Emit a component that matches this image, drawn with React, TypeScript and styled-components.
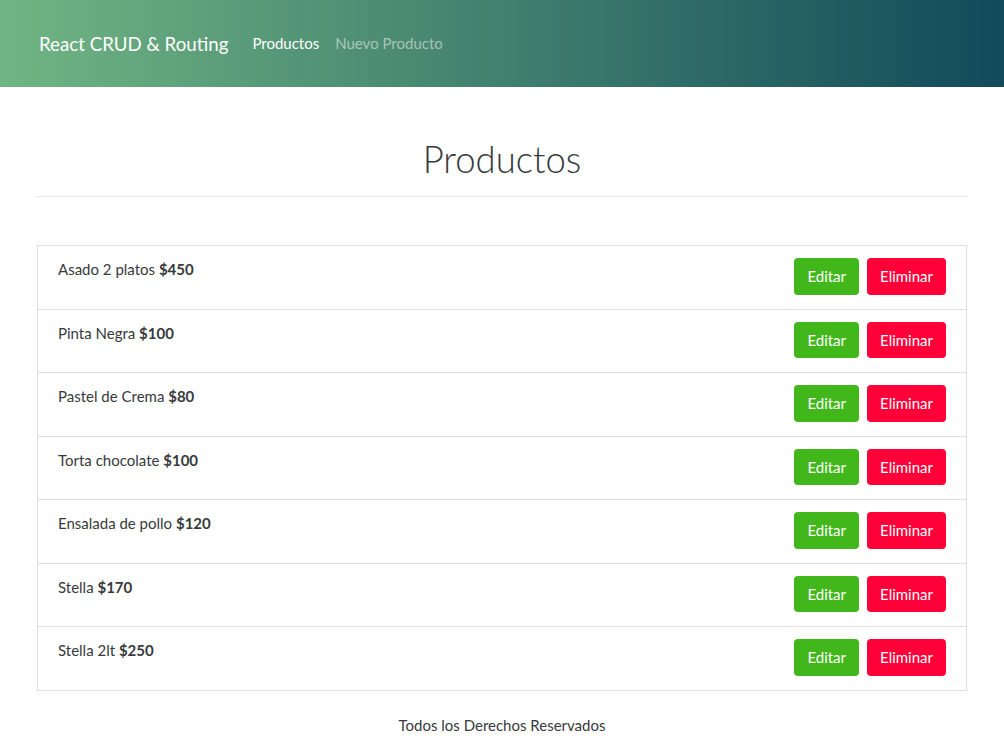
import React from "react";
import styled, { createGlobalStyle } from "styled-components";

const Global = createGlobalStyle`
  * { box-sizing: border-box; }
  html { font-size: 16px; }
  body {
    margin: 0;
    font-family: Lato, "Open Sans", sans-serif;
    font-size: 15px;
    line-height: 1.5;
    color: #373a3c;
    background: #fff;
  }
`;

const Navbar = styled.nav`
  height: 87px;
  background: linear-gradient(to right, #71b583, #124a5a);
  display: flex;
  align-items: center;
`;

const Container = styled.div`
  width: 960px;
  margin: 0 auto;
  padding: 0 15px;
`;

const NavInner = styled(Container)`
  display: flex;
  align-items: center;
`;

const Brand = styled.a`
  font-size: 18.7px;
  line-height: 30px;
  color: #fff;
  margin-right: 16px;
  text-decoration: none;
  padding-left: 2px;
`;

const NavLink = styled.a<{ $active?: boolean }>`
  padding: 8px;
  font-size: 15px;
  color: ${(p) => (p.$active ? "#fff" : "rgba(255,255,255,0.5)")};
  text-decoration: none;
`;

const Title = styled.h1`
  margin: 48px 0 0;
  text-align: center;
  font-size: 36.5px;
  font-weight: 300;
  line-height: 48px;
  color: #373a3c;
`;

const Rule = styled.hr`
  margin: 13px 0 0;
  border: 0;
  border-top: 1px solid #e5e5e5;
`;

const List = styled.ul`
  list-style: none;
  margin: 48px 0 0;
  padding: 0;
  border: 1px solid #dfdfdf;
`;

const Item = styled.li`
  display: flex;
  justify-content: space-between;
  align-items: flex-start;
  padding: 12px 20px;
  & + & {
    border-top: 1px solid #dfdfdf;
  }
`;

const Name = styled.p`
  margin: 0 0 16px;
  line-height: 22.5px;
`;

const Price = styled.span`
  font-weight: 700;
`;

const Actions = styled.div`
  display: flex;
  gap: 8px;
`;

const Button = styled.button<{ $variant: "success" | "danger" }>`
  font-family: inherit;
  font-size: 15px;
  line-height: 22.5px;
  padding: 6px 12px;
  height: 36.5px;
  border: 1px solid transparent;
  border-radius: 4px;
  color: #fff;
  background: ${(p) => (p.$variant === "success" ? "#42b71c" : "#ff0039")};
  cursor: pointer;
`;

const Footer = styled.p`
  margin: 23px 0 0;
  text-align: center;
  line-height: 22.5px;
`;

const products = [
  { name: "Asado 2 platos", price: 450 },
  { name: "Pinta Negra", price: 100 },
  { name: "Pastel de Crema", price: 80 },
  { name: "Torta chocolate", price: 100 },
  { name: "Ensalada de pollo", price: 120 },
  { name: "Stella", price: 170 },
  { name: "Stella 2lt", price: 250 },
];

export default function App() {
  return (
    <>
      <Global />
      <Navbar>
        <NavInner>
          <Brand href="#">React CRUD &amp; Routing</Brand>
          <NavLink href="#" $active>
            Productos
          </NavLink>
          <NavLink href="#">Nuevo Producto</NavLink>
        </NavInner>
      </Navbar>
      <Container>
        <Title>Productos</Title>
        <Rule />
        <List>
          {products.map((p) => (
            <Item key={p.name}>
              <Name>
                {p.name} <Price>${p.price}</Price>
              </Name>
              <Actions>
                <Button $variant="success">Editar</Button>
                <Button $variant="danger">Eliminar</Button>
              </Actions>
            </Item>
          ))}
        </List>
        <Footer>Todos los Derechos Reservados</Footer>
      </Container>
    </>
  );
}
